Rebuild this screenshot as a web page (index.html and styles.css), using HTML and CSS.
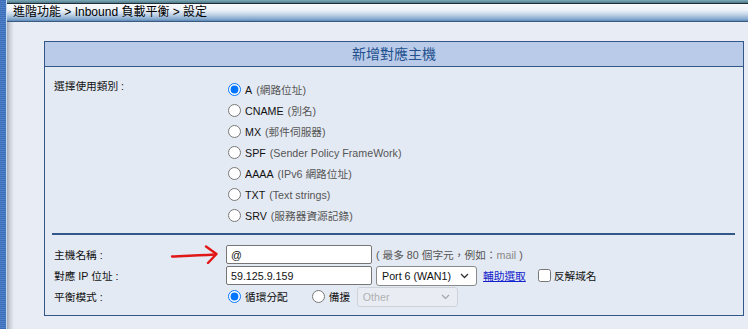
FILE: index.html
```html
<!DOCTYPE html>
<html lang="zh-TW">
<head>
    <meta charset="UTF-8">
    <title>Inbound 負載平衡 - 設定</title>
    <link rel="stylesheet" href="styles.css">
</head>
<body>
    <div class="frame">
        <div class="rail"></div>
        <div class="main">
            <div class="topline"></div>
            <div class="crumb">進階功能 &gt; Inbound 負載平衡 &gt; 設定</div>
            <div class="content">
                <div class="panel">
                    <div class="panel-head">新增對應主機</div>
                    <div class="panel-body">
                        <div class="type-row">
                            <div class="label">選擇使用類別 :</div>
                            <div class="types">
                                <label class="opt"><input type="radio" name="type" checked> A <span class="note">(網路位址)</span></label>
                                <label class="opt"><input type="radio" name="type"> CNAME <span class="note">(別名)</span></label>
                                <label class="opt"><input type="radio" name="type"> MX <span class="note">(郵件伺服器)</span></label>
                                <label class="opt"><input type="radio" name="type"> SPF <span class="note">(Sender Policy FrameWork)</span></label>
                                <label class="opt"><input type="radio" name="type"> AAAA <span class="note">(IPv6 網路位址)</span></label>
                                <label class="opt"><input type="radio" name="type"> TXT <span class="note">(Text strings)</span></label>
                                <label class="opt"><input type="radio" name="type"> SRV <span class="note">(服務器資源記錄)</span></label>
                            </div>
                        </div>
                        <div class="sep"></div>
                        <div class="fields">
                            <div class="field">
                                <div class="label arrow-label">
                                    <span>主機名稱 :</span>
                                    <svg class="arrow" width="48" height="19" viewBox="0 0 48 19">
                                        <path d="M2 11.5 C14 11 28 10.5 45 9.5" fill="none" stroke="#e11616" stroke-width="2.4" stroke-linecap="round"/>
                                        <path d="M36 1.5 L46.5 9 L38 18" fill="none" stroke="#e11616" stroke-width="2.4" stroke-linecap="round" stroke-linejoin="round"/>
                                    </svg>
                                </div>
                                <div class="ctrl">
                                    <input class="text" type="text" value="@">
                                    <span class="hint">( 最多 80 個字元，例如：<span class="faint">mail</span> )</span>
                                </div>
                            </div>
                            <div class="field">
                                <div class="label">對應 IP 位址 :</div>
                                <div class="ctrl">
                                    <input class="text" type="text" value="59.125.9.159">
                                    <span class="dropdown port">
                                        <select>
                                            <option>Port 6 (WAN1)</option>
                                        </select>
                                        <svg class="chev" width="9" height="6" viewBox="0 0 9 6"><path d="M1 1 L4.5 4.5 L8 1" fill="none" stroke="#333" stroke-width="1.3"/></svg>
                                    </span>
                                    <a class="helper" href="#">輔助選取</a>
                                    <label class="check"><input type="checkbox"> 反解域名</label>
                                </div>
                            </div>
                            <div class="field">
                                <div class="label">平衡模式 :</div>
                                <div class="ctrl">
                                    <label class="opt mode"><input type="radio" name="mode" checked> 循環分配</label>
                                    <label class="opt mode backup"><input type="radio" name="mode"> 備援</label>
                                    <span class="dropdown other">
                                        <select disabled>
                                            <option>Other</option>
                                        </select>
                                        <svg class="chev" width="9" height="6" viewBox="0 0 9 6"><path d="M1 1 L4.5 4.5 L8 1" fill="none" stroke="#a0a4aa" stroke-width="1.2"/></svg>
                                    </span>
                                </div>
                            </div>
                        </div>
                    </div>
                </div>
            </div>
        </div>
    </div>
</body>
</html>
```

FILE: styles.css
```css
* {
    box-sizing: border-box;
}

body {
    margin: 0;
    background: #e8ecf5;
    font-family: "Liberation Sans", "Noto Sans CJK TC", sans-serif;
    font-size: 10.7px;
    color: #111;
}

.frame {
    display: flex;
    width: 748px;
    height: 329px;
    overflow: hidden;
}

.rail {
    width: 7px;
    flex-shrink: 0;
    background: repeating-linear-gradient(#3c6db6 0 1px, #4f82c9 1px 2px);
    border-right: 1px solid #c6dcf2;
}

.main {
    flex: 1;
    min-width: 0;
    display: flex;
    flex-direction: column;
}

.topline {
    height: 4px;
    background: linear-gradient(#7eaab6, #50798a);
    border-bottom: 1px solid #1d2d36;
}

.crumb {
    height: 18px;
    line-height: 17px;
    padding-left: 6px;
    font-size: 12px;
    color: #000;
    background: linear-gradient(#f7f9fc 0, #eef3f9 35%, #c6d7e9 60%, #86abd0 88%, #5e89b6 100%);
    border-bottom: 1px solid #3a5a80;
}

.content {
    flex: 1;
    min-width: 0;
    padding: 19px 0 0 37px;
    background: linear-gradient(to right, #a2a8b1 0, #ccd1d9 3px, #e8ecf5 7px);
}

.panel {
    width: 700px;
    border: 1px solid #34578a;
    background: #e4eaf3;
}

.panel-head {
    height: 25px;
    line-height: 24px;
    text-align: center;
    font-size: 14px;
    color: #22508f;
    background: #b9cbe8;
    border-bottom: 1px solid #34578a;
}

.panel-body {
    padding: 12px 8px 9px 9px;
}

.type-row {
    display: grid;
    grid-template-columns: 174px 1fr;
}

.label {
    color: #111;
    line-height: 14px;
}

.types {
    display: flex;
    flex-direction: column;
}

.opt {
    display: flex;
    align-items: center;
    gap: 4px;
    height: 21px;
    color: #111;
}

.opt input {
    margin: 0;
    width: 13px;
    height: 13px;
}

.note {
    color: #555;
}

.sep {
    height: 2px;
    margin: 7px 0 0 -2px;
    background: #34578a;
}

.fields {
    margin-top: 10px;
    display: flex;
    flex-direction: column;
    gap: 2px;
}

.field {
    display: grid;
    grid-template-columns: 172px 1fr;
    align-items: center;
    height: 19px;
}

.arrow-label {
    display: flex;
    align-items: center;
    justify-content: space-between;
    padding-right: 8px;
}

.arrow {
    display: block;
}

.ctrl {
    display: flex;
    align-items: center;
    height: 19px;
}

.text {
    width: 146px;
    height: 19px;
    margin: 0;
    padding: 0 4px;
    border: 1px solid #767676;
    border-radius: 2px;
    background: #fff;
    font-family: "Liberation Sans", "Noto Sans CJK TC", sans-serif;
    font-size: 10.7px;
    color: #111;
}

.hint {
    margin-left: 4px;
    color: #555;
}

.faint {
    color: #888;
}

.dropdown {
    position: relative;
    display: block;
    width: 101px;
    height: 20px;
}

.dropdown select {
    appearance: none;
    width: 100%;
    height: 20px;
    margin: 0;
    padding: 0 18px 0 5px;
    border: 1px solid #8a8a8a;
    border-radius: 3px;
    background: #fff;
    font-family: "Liberation Sans", "Noto Sans CJK TC", sans-serif;
    font-size: 10.7px;
    color: #111;
}

.chev {
    position: absolute;
    right: 8px;
    top: 7px;
    pointer-events: none;
}

.port {
    margin-left: 4px;
}

.other select {
    border-color: #c6cad0;
    background: #eceef2;
    color: #9a9a9a;
}

.helper {
    margin-left: 6px;
    color: #1122cc;
    text-decoration: underline;
}

.check {
    display: flex;
    align-items: center;
    gap: 3px;
    margin-left: 12px;
}

.check input {
    margin: 0;
    width: 13px;
    height: 13px;
}

.mode {
    margin-left: 2px;
}

.backup {
    margin-left: 24px;
    width: 45px;
}
```
